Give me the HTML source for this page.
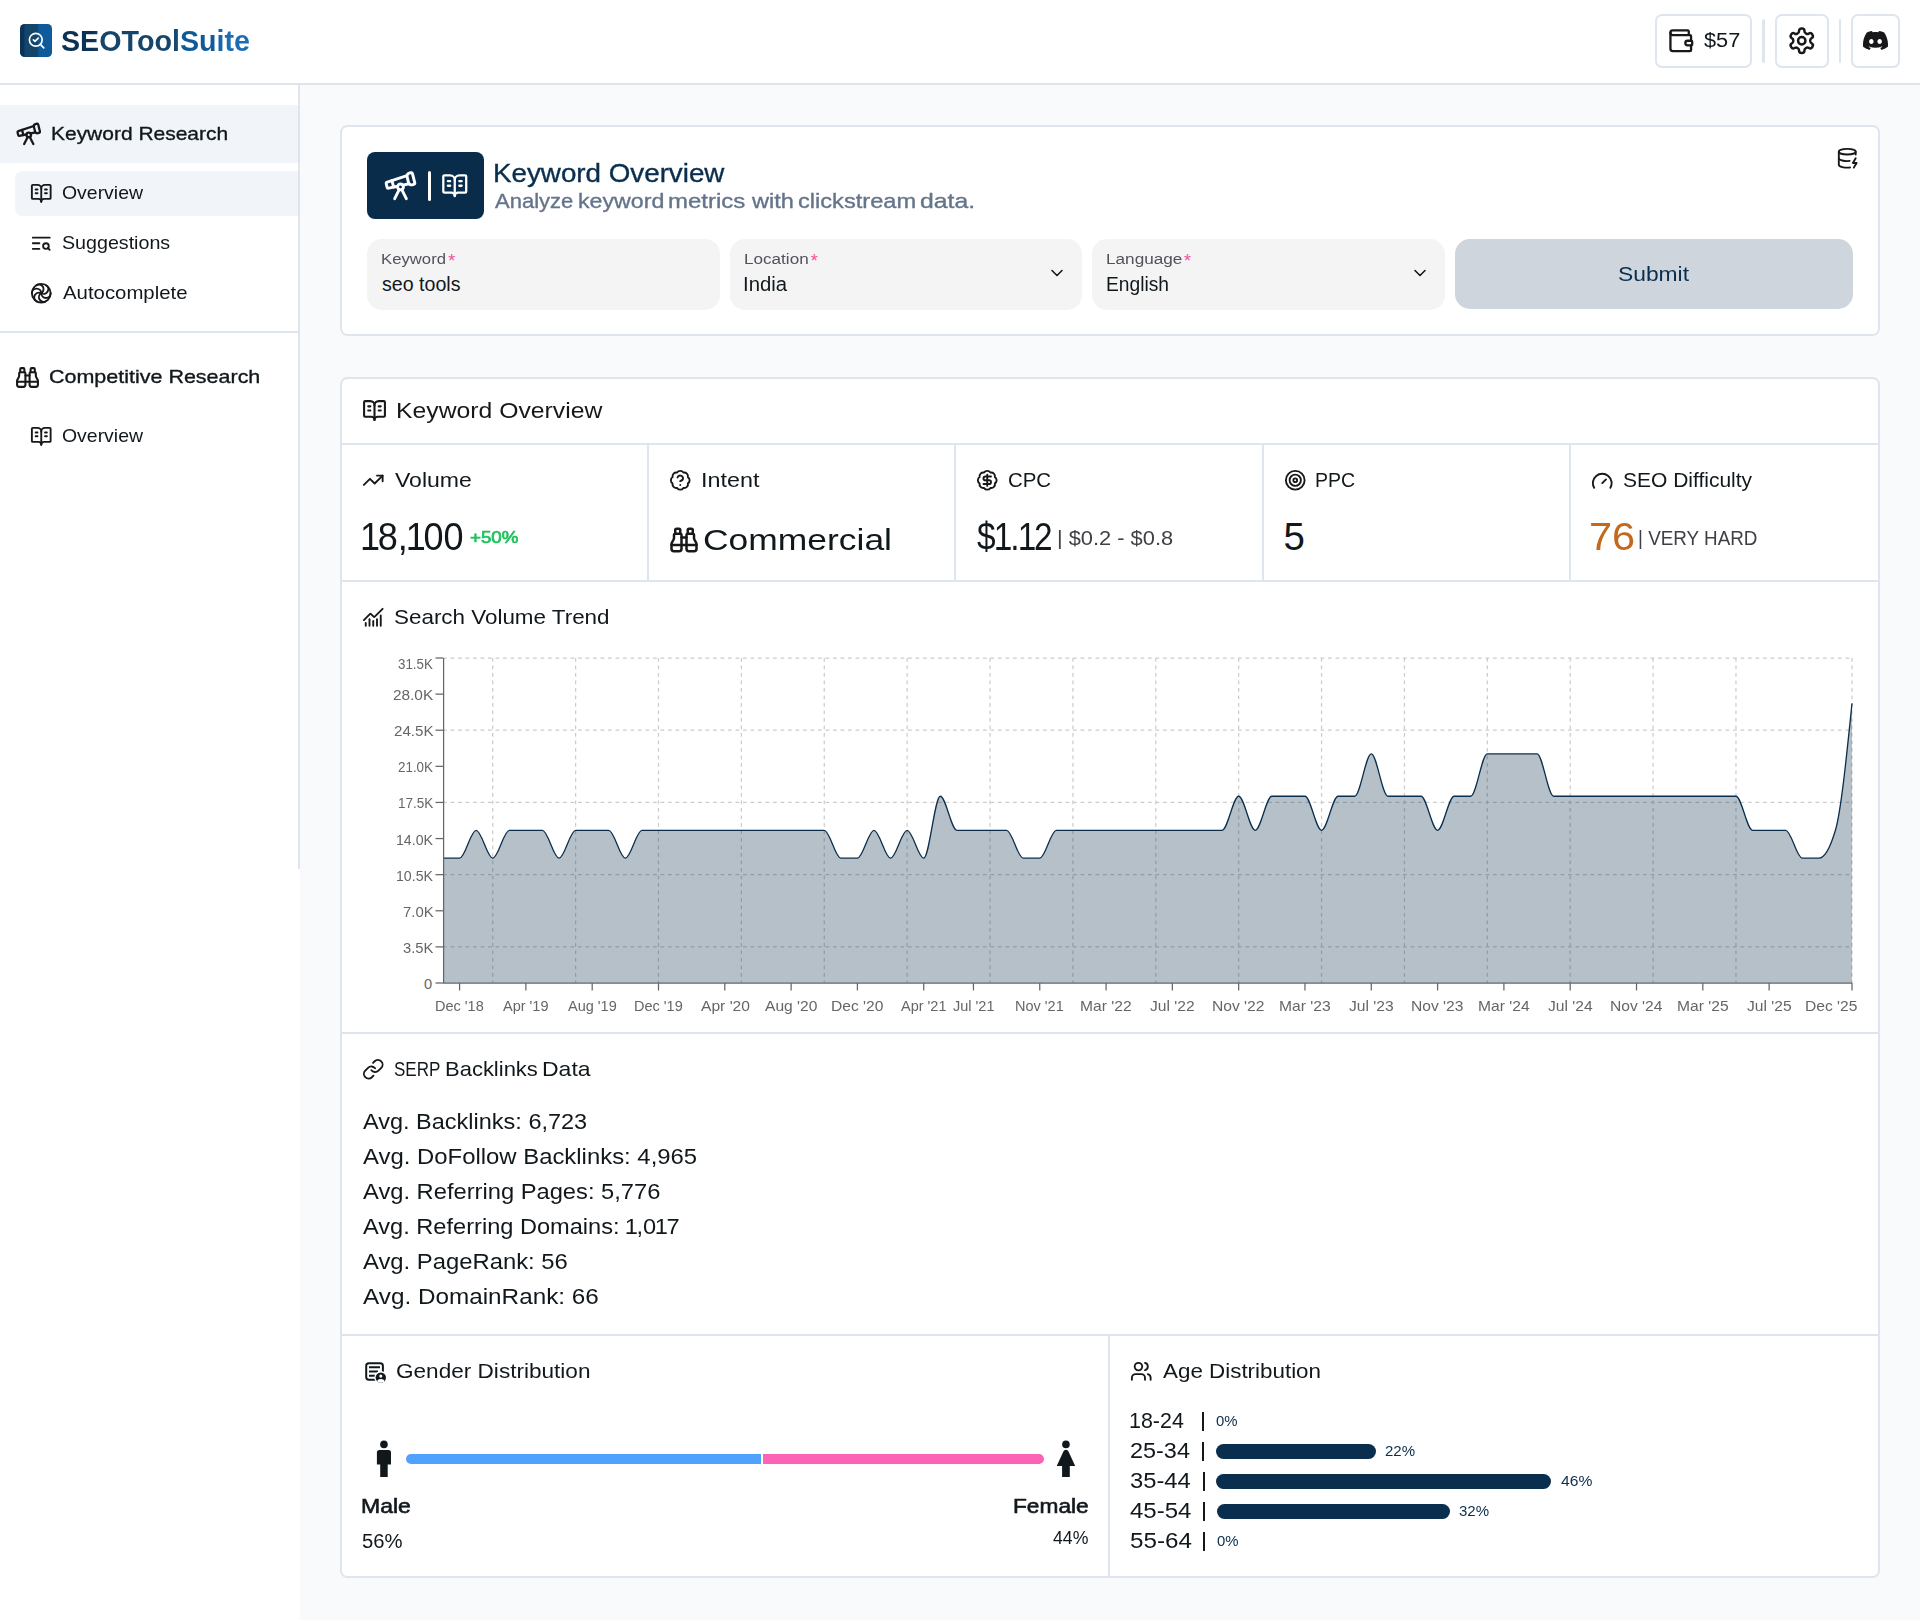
<!DOCTYPE html>
<html lang="en">
<head>
<meta charset="utf-8">
<title>SEOToolSuite - Keyword Overview</title>
<style>
*{box-sizing:border-box;margin:0;padding:0}
html,body{width:1920px;height:1620px;overflow:hidden;background:#fff}
body{position:relative;font-family:"Liberation Sans",sans-serif;color:#11181c;-webkit-font-smoothing:antialiased}
.abs{position:absolute}
.t{position:absolute;white-space:nowrap;line-height:1;transform-origin:0 0}
svg{display:block}
.ic{position:absolute;fill:none;stroke:#18181b;stroke-width:2;stroke-linecap:round;stroke-linejoin:round}
.m{-webkit-text-stroke:0.35px currentColor}
/* header */
#hdr{left:0;top:0;width:1920px;height:85px;background:#fff;border-bottom:2px solid #dfe5ef}
#logo{left:20px;top:24px;width:32px;height:32.75px;border-radius:4.5px;background:linear-gradient(90deg,#0b3358 0%,#0b3358 11%,#14456b 17%,#14456b 54%,#0f5a9a 59%,#0f5a9a 100%)}
.brand{background:linear-gradient(90deg,#0b3154 0%,#0b3154 16.5%,#16456b 19.5%,#16456b 59.5%,#115a98 62.5%,#115a98 80%,#1b6db3 86%,#1b6db3 100%);-webkit-background-clip:text;background-clip:text;color:transparent}
.hbtn{border:2px solid #dfe5ef;border-radius:7px;background:#fff;height:54px;top:14px}
.hsep{width:3px;height:44px;top:19px;background:#dfe5ef;border-radius:2px}
/* main */
#main{left:300px;top:85px;width:1620px;height:1535px;background:#f8fafc}
.card{background:#fff;border:2px solid #dfe5ef;border-radius:7.5px}
.hl{position:absolute;height:2px;background:#dfe5ef}
.vl{position:absolute;width:2px;background:#dfe5ef}
</style>
</head>
<body>
<div class="abs" id="main"></div>
<div class="abs" id="hdr"></div>
<div class="abs" id="logo"><svg class="ic" style="left:6.5px;top:6.9px;stroke:#fff;stroke-width:2.1" width="19.2" height="19.2" viewBox="0 0 24 24"><path d="m8 11 2 2 4-4"/><circle cx="11" cy="11" r="8"/><path d="m21 21-4.3-4.3"/></svg></div>
<div class="t brand" style="left:60.58px;top:22px;font-size:30.40px;line-height:36px;transform:scaleX(0.9433);font-weight:700;padding-right:2px;">SEOToolSuite</div>

<!-- header buttons -->
<div class="abs hbtn" style="left:1655px;width:97px"></div>
<svg class="ic" style="left:1666.9px;top:26.55px" width="27.5" height="27.5" viewBox="0 0 24 24"><path d="M19 7V4a1 1 0 0 0-1-1H5a2 2 0 0 0 0 4h15a1 1 0 0 1 1 1v4h-3a2 2 0 0 0 0 4h3a1 1 0 0 0 1-1v-2a1 1 0 0 0-1-1"/><path d="M3 5v14a2 2 0 0 0 2 2h15a1 1 0 0 0 1-1v-4"/></svg>
<div class="t" style="left:1704.48px;top:28px;font-size:20.30px;line-height:24px;transform:scaleX(1.0740);">$57</div>

<div class="abs hsep" style="left:1762px"></div>
<div class="abs hbtn" style="left:1775px;width:54px"></div>
<svg class="ic" style="left:1787.35px;top:25.95px" width="29.5" height="29.5" viewBox="0 0 24 24"><path d="M12.22 2h-.44a2 2 0 0 0-2 2v.18a2 2 0 0 1-1 1.73l-.43.25a2 2 0 0 1-2 0l-.15-.08a2 2 0 0 0-2.73.73l-.22.38a2 2 0 0 0 .73 2.73l.15.1a2 2 0 0 1 1 1.72v.51a2 2 0 0 1-1 1.74l-.15.09a2 2 0 0 0-.73 2.73l.22.38a2 2 0 0 0 2.73.73l.15-.08a2 2 0 0 1 2 0l.43.25a2 2 0 0 1 1 1.73V20a2 2 0 0 0 2 2h.44a2 2 0 0 0 2-2v-.18a2 2 0 0 1 1-1.73l.43-.25a2 2 0 0 1 2 0l.15.08a2 2 0 0 0 2.73-.73l.22-.39a2 2 0 0 0-.73-2.73l-.15-.08a2 2 0 0 1-1-1.74v-.5a2 2 0 0 1 1-1.74l.15-.09a2 2 0 0 0 .73-2.73l-.22-.38a2 2 0 0 0-2.73-.73l-.15.08a2 2 0 0 1-2 0l-.43-.25a2 2 0 0 1-1-1.73V4a2 2 0 0 0-2-2z"/><circle cx="12" cy="12" r="3"/></svg>
<div class="abs hsep" style="left:1839px;width:2px"></div>
<div class="abs hbtn" style="left:1851px;width:49px"></div>
<svg class="abs" style="left:1863.1px;top:28px" width="25" height="25" viewBox="0 0 24 24"><path fill="#18181b" d="M20.317 4.3698a19.7913 19.7913 0 00-4.8851-1.5152.0741.0741 0 00-.0785.0371c-.211.3753-.4447.8648-.6083 1.2495-1.8447-.2762-3.68-.2762-5.4868 0-.1636-.3933-.4058-.8742-.6177-1.2495a.077.077 0 00-.0785-.037 19.7363 19.7363 0 00-4.8852 1.515.0699.0699 0 00-.0321.0277C.5334 9.0458-.319 13.5799.0992 18.0578a.0824.0824 0 00.0312.0561c2.0528 1.5076 4.0413 2.4228 5.9929 3.0294a.0777.0777 0 00.0842-.0276c.4616-.6304.8731-1.2952 1.226-1.9942a.076.076 0 00-.0416-.1057c-.6528-.2476-1.2743-.5495-1.8722-.8923a.077.077 0 01-.0076-.1277c.1258-.0943.2517-.1923.3718-.2914a.0743.0743 0 01.0776-.0105c3.9278 1.7933 8.18 1.7933 12.0614 0a.0739.0739 0 01.0785.0095c.1202.099.246.1981.3728.2924a.077.077 0 01-.0066.1276 12.2986 12.2986 0 01-1.873.8914.0766.0766 0 00-.0407.1067c.3604.698.7719 1.3628 1.225 1.9932a.076.076 0 00.0842.0286c1.961-.6067 3.9495-1.5219 6.0023-3.0294a.077.077 0 00.0313-.0552c.5004-5.177-.8382-9.6739-3.5485-13.6604a.061.061 0 00-.0312-.0286zM8.02 15.3312c-1.1825 0-2.1569-1.0857-2.1569-2.419 0-1.3332.9555-2.4189 2.157-2.4189 1.2108 0 2.1757 1.0952 2.1568 2.419 0 1.3332-.9555 2.4189-2.1569 2.4189zm7.9748 0c-1.1825 0-2.1569-1.0857-2.1569-2.419 0-1.3332.9554-2.4189 2.1569-2.4189 1.2108 0 2.1757 1.0952 2.1568 2.419 0 1.3332-.946 2.4189-2.1568 2.4189Z"/></svg>
<!-- sidebar -->
<div class="abs" style="left:0;top:85px;width:300px;height:784px;background:#fff;border-right:2px solid #dfe5ef"></div>
<div class="abs" style="left:0;top:105px;width:298px;height:58px;background:#f1f5f9"></div>
<svg class="ic" style="left:15px;top:119.8px" width="27.5" height="27.5" viewBox="0 0 24 24"><path d="m10.065 12.493-6.18 1.318a.934.934 0 0 1-1.108-.702l-.537-2.15a1.07 1.07 0 0 1 .691-1.265l13.504-4.44"/><path d="m13.56 11.747 4.332-.924"/><path d="m16 21-3.105-6.21"/><path d="M16.485 5.94a2 2 0 0 1 1.455-2.425l1.09-.272a1 1 0 0 1 1.212.727l1.515 6.06a1 1 0 0 1-.727 1.213l-1.09.272a2 2 0 0 1-2.425-1.455z"/><path d="m6.158 8.633 1.114 4.456"/><path d="m8 21 3.105-6.21"/><circle cx="12" cy="13" r="2"/></svg>
<div class="t m" style="left:51.02px;top:122px;font-size:19.00px;line-height:23px;transform:scaleX(1.1033);color:#11181c;">Keyword Research</div>

<div class="abs" style="left:15px;top:171px;width:283px;height:45px;background:#f1f5f9;border-radius:8px 0 0 8px"></div>
<svg class="ic" style="left:29.9px;top:181.9px" width="22.5" height="22.5" viewBox="0 0 24 24"><path d="M12 7v14"/><path d="M16 12h2"/><path d="M16 8h2"/><path d="M3 18a1 1 0 0 1-1-1V4a1 1 0 0 1 1-1h5a4 4 0 0 1 4 4 4 4 0 0 1 4-4h5a1 1 0 0 1 1 1v13a1 1 0 0 1-1 1h-6a3 3 0 0 0-3 3 3 3 0 0 0-3-3z"/><path d="M6 12h2"/><path d="M6 8h2"/></svg>
<div class="t" style="left:61.53px;top:182px;font-size:17.70px;line-height:22px;transform:scaleX(1.0984);color:#11181c;">Overview</div>

<svg class="ic" style="left:29.9px;top:232px" width="22.5" height="22.5" viewBox="0 0 24 24"><path d="M21 6H3"/><path d="M10 12H3"/><path d="M10 18H3"/><circle cx="17" cy="15" r="3"/><path d="m21 19-1.9-1.9"/></svg>
<div class="t" style="left:61.71px;top:232px;font-size:17.70px;line-height:22px;transform:scaleX(1.1112);color:#11181c;">Suggestions</div>

<svg class="ic" style="left:29.9px;top:282px" width="22.5" height="22.5" viewBox="0 0 24 24"><path d="M22 12a1 1 0 0 1-10 0 1 1 0 0 0-10 0"/><path d="M7 20.7a1 1 0 1 1 5-8.7 1 1 0 1 0 5-8.6"/><path d="M7 3.3a1 1 0 1 1 5 8.6 1 1 0 1 0 5 8.6"/><circle cx="12" cy="12" r="10"/></svg>
<div class="t" style="left:63.00px;top:282px;font-size:17.70px;line-height:22px;transform:scaleX(1.1513);color:#11181c;">Autocomplete</div>

<div class="hl" style="left:0;top:331px;width:298px"></div>
<svg class="ic" style="left:15px;top:365.1px" width="25" height="25" viewBox="0 0 24 24"><path d="M10 10h4"/><path d="M19 7V4a1 1 0 0 0-1-1h-2a1 1 0 0 0-1 1v3"/><path d="M20 21a2 2 0 0 0 2-2v-3.851c0-1.39-2-2.962-2-4.829V8a1 1 0 0 0-1-1h-4a1 1 0 0 0-1 1v11a2 2 0 0 0 2 2z"/><path d="M 22 16 L 2 16"/><path d="M4 21a2 2 0 0 1-2-2v-3.851c0-1.39 2-2.962 2-4.829V8a1 1 0 0 1 1-1h4a1 1 0 0 1 1 1v11a2 2 0 0 1-2 2z"/><path d="M9 7V4a1 1 0 0 0-1-1H6a1 1 0 0 0-1 1v3"/></svg>
<div class="t m" style="left:49.13px;top:365px;font-size:19.00px;line-height:23px;transform:scaleX(1.1306);color:#11181c;">Competitive Research</div>

<svg class="ic" style="left:29.9px;top:425.3px" width="22.5" height="22.5" viewBox="0 0 24 24"><path d="M12 7v14"/><path d="M16 12h2"/><path d="M16 8h2"/><path d="M3 18a1 1 0 0 1-1-1V4a1 1 0 0 1 1-1h5a4 4 0 0 1 4 4 4 4 0 0 1 4-4h5a1 1 0 0 1 1 1v13a1 1 0 0 1-1 1h-6a3 3 0 0 0-3 3 3 3 0 0 0-3-3z"/><path d="M6 12h2"/><path d="M6 8h2"/></svg>
<div class="t" style="left:61.53px;top:425px;font-size:17.70px;line-height:22px;transform:scaleX(1.0984);color:#11181c;">Overview</div>

<!-- card 1 -->
<div class="abs card" style="left:340px;top:125px;width:1540px;height:211px"></div>
<div class="abs" style="left:367px;top:152px;width:117px;height:67px;background:#082c4a;border-radius:8px"></div>
<svg class="ic" style="left:382.85px;top:168px;stroke:#fff" width="35" height="35" viewBox="0 0 24 24"><path d="m10.065 12.493-6.18 1.318a.934.934 0 0 1-1.108-.702l-.537-2.15a1.07 1.07 0 0 1 .691-1.265l13.504-4.44"/><path d="m13.56 11.747 4.332-.924"/><path d="m16 21-3.105-6.21"/><path d="M16.485 5.94a2 2 0 0 1 1.455-2.425l1.09-.272a1 1 0 0 1 1.212.727l1.515 6.06a1 1 0 0 1-.727 1.213l-1.09.272a2 2 0 0 1-2.425-1.455z"/><path d="m6.158 8.633 1.114 4.456"/><path d="m8 21 3.105-6.21"/><circle cx="12" cy="13" r="2"/></svg>
<div class="abs" style="left:428px;top:171px;width:3px;height:29.5px;background:#fff;border-radius:1.5px"></div>
<svg class="ic" style="left:441px;top:172.1px;stroke:#fff" width="27.5" height="27.5" viewBox="0 0 24 24"><path d="M12 7v14"/><path d="M16 12h2"/><path d="M16 8h2"/><path d="M3 18a1 1 0 0 1-1-1V4a1 1 0 0 1 1-1h5a4 4 0 0 1 4 4 4 4 0 0 1 4-4h5a1 1 0 0 1 1 1v13a1 1 0 0 1-1 1h-6a3 3 0 0 0-3 3 3 3 0 0 0-3-3z"/><path d="M6 12h2"/><path d="M6 8h2"/></svg>
<div class="t m" style="left:493.28px;top:158px;font-size:25.00px;line-height:30px;transform:scaleX(1.1104);color:#0a2e4d;">Keyword Overview</div>

<div class="t m" style="left:494.60px;top:189px;font-size:19.80px;line-height:24px;transform:scaleX(1.1121);color:#64748b;">Analyze</div>

<div class="t m" style="left:577.99px;top:189px;font-size:19.80px;line-height:24px;transform:scaleX(1.1714);color:#64748b;">keyword</div>

<div class="t m" style="left:668.34px;top:189px;font-size:19.80px;line-height:24px;transform:scaleX(1.2124);color:#64748b;">metrics</div>

<div class="t m" style="left:751.70px;top:189px;font-size:19.80px;line-height:24px;transform:scaleX(1.1892);color:#64748b;">with</div>

<div class="t m" style="left:797.85px;top:189px;font-size:19.80px;line-height:24px;transform:scaleX(1.1936);color:#64748b;">clickstream</div>

<div class="t m" style="left:920.41px;top:189px;font-size:19.80px;line-height:24px;transform:scaleX(1.2512);color:#64748b;">data.</div>

<svg class="ic" style="left:1835.9px;top:147.1px" width="22.5" height="22.5" viewBox="0 0 24 24"><ellipse cx="12" cy="5" rx="9" ry="3"/><path d="M3 5V19A9 3 0 0 0 15 21.84"/><path d="M21 5V8"/><path d="M21 12L18 17H22L19 22"/><path d="M3 12A9 3 0 0 0 14.59 14.87"/></svg>
<!-- inputs -->
<div class="abs" style="left:367px;top:239px;width:353px;height:71px;background:#f4f4f5;border-radius:15px"></div>
<div class="t" style="left:381.16px;top:249px;font-size:15.20px;line-height:19px;transform:scaleX(1.1000);color:#52525b;">Keyword</div>

<div class="t" style="left:448.33px;top:250px;font-size:18.00px;line-height:22px;color:#f4529f;">*</div>

<div class="t" style="left:382.01px;top:272px;font-size:19.60px;line-height:24px;color:#11181c;">seo tools</div>

<div class="abs" style="left:730px;top:239px;width:352.3px;height:71px;background:#f4f4f5;border-radius:15px"></div>
<div class="t" style="left:743.83px;top:249px;font-size:15.20px;line-height:19px;transform:scaleX(1.1260);color:#52525b;">Location</div>

<div class="t" style="left:810.63px;top:250px;font-size:18.00px;line-height:22px;color:#f4529f;">*</div>

<div class="t" style="left:743.37px;top:272px;font-size:19.60px;line-height:24px;transform:scaleX(1.0376);color:#11181c;">India</div>

<svg class="ic" style="left:1047px;top:263px;stroke-width:1.9" width="20" height="20" viewBox="0 0 24 24"><path d="m6 9 6 6 6-6"/></svg>
<div class="abs" style="left:1092px;top:239px;width:353px;height:71px;background:#f4f4f5;border-radius:15px"></div>
<div class="t" style="left:1105.93px;top:249px;font-size:15.20px;line-height:19px;transform:scaleX(1.1304);color:#52525b;">Language</div>

<div class="t" style="left:1183.93px;top:250px;font-size:18.00px;line-height:22px;color:#f4529f;">*</div>

<div class="t" style="left:1105.76px;top:272px;font-size:19.60px;line-height:24px;transform:scaleX(0.9814);color:#11181c;">English</div>

<svg class="ic" style="left:1409.5px;top:263px;stroke-width:1.9" width="20" height="20" viewBox="0 0 24 24"><path d="m6 9 6 6 6-6"/></svg>
<div class="abs" style="left:1455px;top:239px;width:398px;height:70px;background:#ced5dd;border-radius:15px"></div>
<div class="t" style="left:1617.97px;top:262px;font-size:20.30px;line-height:24px;transform:scaleX(1.1250);color:#0a2e4d;">Submit</div>

<!-- card 2 -->
<div class="abs card" style="left:340px;top:377px;width:1540px;height:1201px"></div>
<svg class="ic" style="left:362.3px;top:397.9px" width="25" height="25" viewBox="0 0 24 24"><path d="M12 7v14"/><path d="M16 12h2"/><path d="M16 8h2"/><path d="M3 18a1 1 0 0 1-1-1V4a1 1 0 0 1 1-1h5a4 4 0 0 1 4 4 4 4 0 0 1 4-4h5a1 1 0 0 1 1 1v13a1 1 0 0 1-1 1h-6a3 3 0 0 0-3 3 3 3 0 0 0-3-3z"/><path d="M6 12h2"/><path d="M6 8h2"/></svg>
<div class="t" style="left:395.72px;top:396px;font-size:22.70px;line-height:28px;transform:scaleX(1.0912);color:#18181b;">Keyword Overview</div>

<div class="hl" style="left:342px;top:443px;width:1536px"></div>
<div class="vl" style="left:647px;top:445px;height:135px"></div>
<div class="vl" style="left:954px;top:445px;height:135px"></div>
<div class="vl" style="left:1261.5px;top:445px;height:135px"></div>
<div class="vl" style="left:1569px;top:445px;height:135px"></div>
<div class="hl" style="left:342px;top:580px;width:1536px"></div>
<!-- volume -->
<svg class="ic" style="left:361.8px;top:468.7px" width="22.5" height="22.5" viewBox="0 0 24 24"><polyline points="22 7 13.5 15.5 8.5 10.5 2 17"/><polyline points="16 7 22 7 22 13"/></svg>
<div class="t" style="left:395.00px;top:468px;font-size:20.20px;line-height:24px;transform:scaleX(1.1418);">Volume</div>

<div class="t" style="left:362.24px;top:514px;font-size:38.40px;line-height:45px;transform:scaleX(0.9384);"><span style="margin:0 -0.066em 0 -0.054em">1</span>8,<span style="margin:0 -0.066em 0 -0.054em">1</span>00</div>

<div class="t" style="left:470.06px;top:526px;font-size:17.30px;line-height:22px;transform:scaleX(1.0845);color:#1fc25c;-webkit-text-stroke:.7px currentColor;">+50%</div>

<!-- intent -->
<svg class="ic" style="left:669.3px;top:469.3px" width="22.5" height="22.5" viewBox="0 0 24 24"><path d="M3.85 8.62a4 4 0 0 1 4.78-4.77 4 4 0 0 1 6.74 0 4 4 0 0 1 4.78 4.78 4 4 0 0 1 0 6.74 4 4 0 0 1-4.77 4.78 4 4 0 0 1-6.75 0 4 4 0 0 1-4.78-4.77 4 4 0 0 1 0-6.76Z"/><path d="M9.09 9a3 3 0 0 1 5.83 1c0 2-3 3-3 3"/><line x1="12" x2="12.01" y1="17" y2="17"/></svg>
<div class="t" style="left:700.70px;top:468px;font-size:20.20px;line-height:24px;transform:scaleX(1.1565);">Intent</div>

<svg class="ic" style="left:668.75px;top:525.2px" width="30" height="30" viewBox="0 0 24 24"><path d="M10 10h4"/><path d="M19 7V4a1 1 0 0 0-1-1h-2a1 1 0 0 0-1 1v3"/><path d="M20 21a2 2 0 0 0 2-2v-3.851c0-1.39-2-2.962-2-4.829V8a1 1 0 0 0-1-1h-4a1 1 0 0 0-1 1v11a2 2 0 0 0 2 2z"/><path d="M 22 16 L 2 16"/><path d="M4 21a2 2 0 0 1-2-2v-3.851c0-1.39 2-2.962 2-4.829V8a1 1 0 0 1 1-1h4a1 1 0 0 1 1 1v11a2 2 0 0 1-2 2z"/><path d="M9 7V4a1 1 0 0 0-1-1H6a1 1 0 0 0-1 1v3"/></svg>
<div class="t" style="left:703.23px;top:521px;font-size:30.40px;line-height:36px;transform:scaleX(1.1658);">Commercial</div>

<!-- cpc -->
<svg class="ic" style="left:975.8px;top:469px" width="22.5" height="22.5" viewBox="0 0 24 24"><path d="M3.85 8.62a4 4 0 0 1 4.78-4.77 4 4 0 0 1 6.74 0 4 4 0 0 1 4.78 4.78 4 4 0 0 1 0 6.74 4 4 0 0 1-4.77 4.78 4 4 0 0 1-6.75 0 4 4 0 0 1-4.78-4.77 4 4 0 0 1 0-6.76Z"/><path d="M16 8h-6a2 2 0 1 0 0 4h4a2 2 0 1 1 0 4H8"/><path d="M12 18V6"/></svg>
<div class="t" style="left:1008.28px;top:468px;font-size:19.80px;line-height:24px;transform:scaleX(1.0325);">CPC</div>

<div class="t" style="left:977.47px;top:514px;font-size:38.40px;line-height:45px;transform:scaleX(0.8704);">$<span style="margin:0 -0.066em 0 -0.054em">1</span>.<span style="margin:0 -0.066em 0 -0.054em">1</span>2</div>

<div class="t" style="left:1057.44px;top:526px;font-size:20.00px;line-height:24px;transform:scaleX(1.0914);color:#3f3f46;">| $0.2 - $0.8</div>

<!-- ppc -->
<svg class="ic" style="left:1283.8px;top:469px" width="22.5" height="22.5" viewBox="0 0 24 24"><circle cx="12" cy="12" r="10"/><circle cx="12" cy="12" r="6"/><circle cx="12" cy="12" r="2"/></svg>
<div class="t" style="left:1314.54px;top:468px;font-size:19.80px;line-height:24px;transform:scaleX(0.9867);">PPC</div>

<div class="t" style="left:1283.46px;top:514px;font-size:38.40px;line-height:45px;">5</div>

<!-- seo difficulty -->
<svg class="ic" style="left:1590.7px;top:469.7px" width="22.5" height="22.5" viewBox="0 0 24 24"><path d="m12 14 4-4"/><path d="M3.34 19a10 10 0 1 1 17.32 0"/></svg>
<div class="t" style="left:1622.56px;top:468px;font-size:20.20px;line-height:24px;transform:scaleX(1.0396);">SEO Difficulty</div>

<div class="t" style="left:1588.52px;top:514px;font-size:38.40px;line-height:45px;transform:scaleX(1.0825);color:#c2691c;">76</div>

<div class="t" style="left:1638.40px;top:526px;font-size:20.00px;line-height:24px;transform:scaleX(0.9428);color:#3f3f46;">| VERY HARD</div>

<!-- chart -->
<svg class="ic" style="left:361.8px;top:606.4px" width="22.5" height="22.5" viewBox="0 0 24 24"><path d="M12 16v5"/><path d="M16 14v7"/><path d="M20 10v11"/><path d="m22 3-8.646 8.646a.5.5 0 0 1-.708 0L9.354 8.354a.5.5 0 0 0-.707 0L2 15"/><path d="M4 18v3"/><path d="M8 14v7"/></svg>
<div class="t" style="left:393.99px;top:605px;font-size:20.20px;line-height:24px;transform:scaleX(1.1103);">Search Volume Trend</div>

<svg class="abs" style="left:0;top:0" width="1920" height="1620" viewBox="0 0 1920 1620">
<g stroke="#ccc" stroke-width="1.25" stroke-dasharray="3.75 3.75" fill="none"><line x1="443" x2="1852" y1="946.89" y2="946.89"/><line x1="443" x2="1852" y1="874.67" y2="874.67"/><line x1="443" x2="1852" y1="802.44" y2="802.44"/><line x1="443" x2="1852" y1="730.22" y2="730.22"/><line x1="443" x2="1852" y1="658.00" y2="658.00"/><line y1="658" y2="983" x1="492.73" x2="492.73"/><line y1="658" y2="983" x1="575.61" x2="575.61"/><line y1="658" y2="983" x1="658.49" x2="658.49"/><line y1="658" y2="983" x1="741.38" x2="741.38"/><line y1="658" y2="983" x1="824.26" x2="824.26"/><line y1="658" y2="983" x1="907.14" x2="907.14"/><line y1="658" y2="983" x1="990.02" x2="990.02"/><line y1="658" y2="983" x1="1072.91" x2="1072.91"/><line y1="658" y2="983" x1="1155.79" x2="1155.79"/><line y1="658" y2="983" x1="1238.67" x2="1238.67"/><line y1="658" y2="983" x1="1321.55" x2="1321.55"/><line y1="658" y2="983" x1="1404.44" x2="1404.44"/><line y1="658" y2="983" x1="1487.32" x2="1487.32"/><line y1="658" y2="983" x1="1570.20" x2="1570.20"/><line y1="658" y2="983" x1="1653.08" x2="1653.08"/><line y1="658" y2="983" x1="1735.96" x2="1735.96"/><line y1="658" y2="983" x1="1852.00" x2="1852.00"/></g>
<path d="M443.00,858.16L459.58,858.16C465.10,858.16,470.63,830.30,476.15,830.30C481.68,830.30,487.20,858.16,492.73,858.16C498.25,858.16,503.78,830.30,509.31,830.30L525.88,830.30L542.46,830.30C547.98,830.30,553.51,858.16,559.04,858.16C564.56,858.16,570.09,830.30,575.61,830.30L592.19,830.30L608.76,830.30C614.29,830.30,619.82,858.16,625.34,858.16C630.87,858.16,636.39,830.30,641.92,830.30L658.49,830.30L675.07,830.30L691.65,830.30L708.22,830.30L724.80,830.30L741.38,830.30L757.95,830.30L774.53,830.30L791.11,830.30L807.68,830.30L824.26,830.30C829.78,830.30,835.31,858.16,840.84,858.16L857.41,858.16C862.94,858.16,868.46,830.30,873.99,830.30C879.51,830.30,885.04,858.16,890.56,858.16C896.09,858.16,901.62,830.30,907.14,830.30C912.67,830.30,918.19,858.16,923.72,858.16C929.24,858.16,934.77,796.25,940.29,796.25C945.82,796.25,951.35,830.30,956.87,830.30L973.45,830.30L990.02,830.30L1006.60,830.30C1012.13,830.30,1017.65,858.16,1023.18,858.16L1039.75,858.16C1045.28,858.16,1050.80,830.30,1056.33,830.30L1072.91,830.30L1089.48,830.30L1106.06,830.30L1122.64,830.30L1139.21,830.30L1155.79,830.30L1172.36,830.30L1188.94,830.30L1205.52,830.30L1222.09,830.30C1227.62,830.30,1233.15,796.25,1238.67,796.25C1244.20,796.25,1249.72,830.30,1255.25,830.30C1260.77,830.30,1266.30,796.25,1271.82,796.25L1288.40,796.25L1304.98,796.25C1310.50,796.25,1316.03,830.30,1321.55,830.30C1327.08,830.30,1332.60,796.25,1338.13,796.25L1354.71,796.25C1360.23,796.25,1365.76,753.95,1371.28,753.95C1376.81,753.95,1382.33,796.25,1387.86,796.25L1404.44,796.25L1421.01,796.25C1426.54,796.25,1432.06,830.30,1437.59,830.30C1443.11,830.30,1448.64,796.25,1454.16,796.25L1470.74,796.25C1476.27,796.25,1481.79,753.95,1487.32,753.95L1503.89,753.95L1520.47,753.95L1537.05,753.95C1542.57,753.95,1548.10,796.25,1553.62,796.25L1570.20,796.25L1586.78,796.25L1603.35,796.25L1619.93,796.25L1636.51,796.25L1653.08,796.25L1669.66,796.25L1686.24,796.25L1702.81,796.25L1719.39,796.25L1735.96,796.25C1741.49,796.25,1747.02,830.30,1752.54,830.30L1769.12,830.30L1785.69,830.30C1791.22,830.30,1796.75,858.16,1802.27,858.16L1818.85,858.16C1824.37,858.16,1829.90,848.87,1835.42,830.30C1840.95,811.73,1846.47,757.56,1852.00,703.40L1852,983L443,983Z" fill="#0a2e4d" fill-opacity="0.3" stroke="none"/>
<path d="M443.00,858.16L459.58,858.16C465.10,858.16,470.63,830.30,476.15,830.30C481.68,830.30,487.20,858.16,492.73,858.16C498.25,858.16,503.78,830.30,509.31,830.30L525.88,830.30L542.46,830.30C547.98,830.30,553.51,858.16,559.04,858.16C564.56,858.16,570.09,830.30,575.61,830.30L592.19,830.30L608.76,830.30C614.29,830.30,619.82,858.16,625.34,858.16C630.87,858.16,636.39,830.30,641.92,830.30L658.49,830.30L675.07,830.30L691.65,830.30L708.22,830.30L724.80,830.30L741.38,830.30L757.95,830.30L774.53,830.30L791.11,830.30L807.68,830.30L824.26,830.30C829.78,830.30,835.31,858.16,840.84,858.16L857.41,858.16C862.94,858.16,868.46,830.30,873.99,830.30C879.51,830.30,885.04,858.16,890.56,858.16C896.09,858.16,901.62,830.30,907.14,830.30C912.67,830.30,918.19,858.16,923.72,858.16C929.24,858.16,934.77,796.25,940.29,796.25C945.82,796.25,951.35,830.30,956.87,830.30L973.45,830.30L990.02,830.30L1006.60,830.30C1012.13,830.30,1017.65,858.16,1023.18,858.16L1039.75,858.16C1045.28,858.16,1050.80,830.30,1056.33,830.30L1072.91,830.30L1089.48,830.30L1106.06,830.30L1122.64,830.30L1139.21,830.30L1155.79,830.30L1172.36,830.30L1188.94,830.30L1205.52,830.30L1222.09,830.30C1227.62,830.30,1233.15,796.25,1238.67,796.25C1244.20,796.25,1249.72,830.30,1255.25,830.30C1260.77,830.30,1266.30,796.25,1271.82,796.25L1288.40,796.25L1304.98,796.25C1310.50,796.25,1316.03,830.30,1321.55,830.30C1327.08,830.30,1332.60,796.25,1338.13,796.25L1354.71,796.25C1360.23,796.25,1365.76,753.95,1371.28,753.95C1376.81,753.95,1382.33,796.25,1387.86,796.25L1404.44,796.25L1421.01,796.25C1426.54,796.25,1432.06,830.30,1437.59,830.30C1443.11,830.30,1448.64,796.25,1454.16,796.25L1470.74,796.25C1476.27,796.25,1481.79,753.95,1487.32,753.95L1503.89,753.95L1520.47,753.95L1537.05,753.95C1542.57,753.95,1548.10,796.25,1553.62,796.25L1570.20,796.25L1586.78,796.25L1603.35,796.25L1619.93,796.25L1636.51,796.25L1653.08,796.25L1669.66,796.25L1686.24,796.25L1702.81,796.25L1719.39,796.25L1735.96,796.25C1741.49,796.25,1747.02,830.30,1752.54,830.30L1769.12,830.30L1785.69,830.30C1791.22,830.30,1796.75,858.16,1802.27,858.16L1818.85,858.16C1824.37,858.16,1829.90,848.87,1835.42,830.30C1840.95,811.73,1846.47,757.56,1852.00,703.40" fill="none" stroke="#0a2e4d" stroke-width="1.3"/>
<g stroke="#666" stroke-width="1.25" fill="none"><line x1="443.6" x2="443.6" y1="658" y2="983"/><line x1="443" x2="1852" y1="983" y2="983"/><line x1="435.5" x2="443" y1="983.00" y2="983.00"/><line x1="435.5" x2="443" y1="946.89" y2="946.89"/><line x1="435.5" x2="443" y1="910.78" y2="910.78"/><line x1="435.5" x2="443" y1="874.67" y2="874.67"/><line x1="435.5" x2="443" y1="838.56" y2="838.56"/><line x1="435.5" x2="443" y1="802.44" y2="802.44"/><line x1="435.5" x2="443" y1="766.33" y2="766.33"/><line x1="435.5" x2="443" y1="730.22" y2="730.22"/><line x1="435.5" x2="443" y1="694.11" y2="694.11"/><line x1="435.5" x2="443" y1="658.00" y2="658.00"/><line y1="983" y2="990.5" x1="459.58" x2="459.58"/><line y1="983" y2="990.5" x1="525.88" x2="525.88"/><line y1="983" y2="990.5" x1="592.19" x2="592.19"/><line y1="983" y2="990.5" x1="658.49" x2="658.49"/><line y1="983" y2="990.5" x1="724.80" x2="724.80"/><line y1="983" y2="990.5" x1="791.11" x2="791.11"/><line y1="983" y2="990.5" x1="857.41" x2="857.41"/><line y1="983" y2="990.5" x1="923.72" x2="923.72"/><line y1="983" y2="990.5" x1="973.45" x2="973.45"/><line y1="983" y2="990.5" x1="1039.75" x2="1039.75"/><line y1="983" y2="990.5" x1="1106.06" x2="1106.06"/><line y1="983" y2="990.5" x1="1172.36" x2="1172.36"/><line y1="983" y2="990.5" x1="1238.67" x2="1238.67"/><line y1="983" y2="990.5" x1="1304.98" x2="1304.98"/><line y1="983" y2="990.5" x1="1371.28" x2="1371.28"/><line y1="983" y2="990.5" x1="1437.59" x2="1437.59"/><line y1="983" y2="990.5" x1="1503.89" x2="1503.89"/><line y1="983" y2="990.5" x1="1570.20" x2="1570.20"/><line y1="983" y2="990.5" x1="1636.51" x2="1636.51"/><line y1="983" y2="990.5" x1="1702.81" x2="1702.81"/><line y1="983" y2="990.5" x1="1769.12" x2="1769.12"/><line y1="983" y2="990.5" x1="1852.00" x2="1852.00"/></g>
</svg>
<div class="t" style="left:423.89px;top:975px;font-size:14.60px;line-height:18px;color:#666;">0</div>

<div class="t" style="left:402.78px;top:939px;font-size:14.60px;line-height:18px;transform:scaleX(1.0130);color:#666;">3.5K</div>

<div class="t" style="left:402.56px;top:903px;font-size:14.60px;line-height:18px;transform:scaleX(1.0205);color:#666;">7.0K</div>

<div class="t" style="left:396.24px;top:867px;font-size:14.60px;line-height:18px;transform:scaleX(0.9692);color:#666;">10.5K</div>

<div class="t" style="left:396.24px;top:831px;font-size:14.60px;line-height:18px;transform:scaleX(0.9692);color:#666;">14.0K</div>

<div class="t" style="left:397.89px;top:794px;font-size:14.60px;line-height:18px;transform:scaleX(0.9259);color:#666;">17.5K</div>

<div class="t" style="left:398.23px;top:758px;font-size:14.60px;line-height:18px;transform:scaleX(0.9168);color:#666;">21.0K</div>

<div class="t" style="left:393.64px;top:722px;font-size:14.60px;line-height:18px;transform:scaleX(1.0375);color:#666;">24.5K</div>

<div class="t" style="left:393.03px;top:686px;font-size:14.60px;line-height:18px;transform:scaleX(1.0535);color:#666;">28.0K</div>

<div class="t" style="left:398.43px;top:655px;font-size:14.60px;line-height:18px;transform:scaleX(0.9115);color:#666;">31.5K</div>

<div class="t" style="left:434.92px;top:997px;font-size:14.80px;line-height:18px;transform:scaleX(0.9799);color:#666;">Dec '18</div>

<div class="t" style="left:503.47px;top:997px;font-size:14.80px;line-height:18px;transform:scaleX(0.9801);color:#666;">Apr '19</div>

<div class="t" style="left:568.15px;top:997px;font-size:14.80px;line-height:18px;transform:scaleX(0.9800);color:#666;">Aug '19</div>

<div class="t" style="left:633.87px;top:997px;font-size:14.80px;line-height:18px;transform:scaleX(0.9800);color:#666;">Dec '19</div>

<div class="t" style="left:700.60px;top:997px;font-size:14.80px;line-height:18px;transform:scaleX(1.0549);color:#666;">Apr '20</div>

<div class="t" style="left:765.15px;top:997px;font-size:14.80px;line-height:18px;transform:scaleX(1.0549);color:#666;">Aug '20</div>

<div class="t" style="left:830.83px;top:997px;font-size:14.80px;line-height:18px;transform:scaleX(1.0551);color:#666;">Dec '20</div>

<div class="t" style="left:901.31px;top:997px;font-size:14.80px;line-height:18px;transform:scaleX(0.9801);color:#666;">Apr '21</div>

<div class="t" style="left:952.92px;top:997px;font-size:14.80px;line-height:18px;transform:scaleX(0.9800);color:#666;">Jul '21</div>

<div class="t" style="left:1015.13px;top:997px;font-size:14.80px;line-height:18px;transform:scaleX(0.9800);color:#666;">Nov '21</div>

<div class="t" style="left:1080.02px;top:997px;font-size:14.80px;line-height:18px;transform:scaleX(1.0551);color:#666;">Mar '22</div>

<div class="t" style="left:1150.28px;top:997px;font-size:14.80px;line-height:18px;transform:scaleX(1.0548);color:#666;">Jul '22</div>

<div class="t" style="left:1212.16px;top:997px;font-size:14.80px;line-height:18px;transform:scaleX(1.0552);color:#666;">Nov '22</div>

<div class="t" style="left:1278.90px;top:997px;font-size:14.80px;line-height:18px;transform:scaleX(1.0549);color:#666;">Mar '23</div>

<div class="t" style="left:1349.15px;top:997px;font-size:14.80px;line-height:18px;transform:scaleX(1.0551);color:#666;">Jul '23</div>

<div class="t" style="left:1411.04px;top:997px;font-size:14.80px;line-height:18px;transform:scaleX(1.0550);color:#666;">Nov '23</div>

<div class="t" style="left:1477.70px;top:997px;font-size:14.80px;line-height:18px;transform:scaleX(1.0551);color:#666;">Mar '24</div>

<div class="t" style="left:1547.95px;top:997px;font-size:14.80px;line-height:18px;transform:scaleX(1.0552);color:#666;">Jul '24</div>

<div class="t" style="left:1609.84px;top:997px;font-size:14.80px;line-height:18px;transform:scaleX(1.0551);color:#666;">Nov '24</div>

<div class="t" style="left:1676.74px;top:997px;font-size:14.80px;line-height:18px;transform:scaleX(1.0549);color:#666;">Mar '25</div>

<div class="t" style="left:1746.99px;top:997px;font-size:14.80px;line-height:18px;transform:scaleX(1.0551);color:#666;">Jul '25</div>

<div class="t" style="left:1804.76px;top:997px;font-size:14.80px;line-height:18px;transform:scaleX(1.0548);color:#666;">Dec '25</div>

<!-- serp -->
<div class="hl" style="left:342px;top:1032px;width:1536px"></div>
<svg class="ic" style="left:361.8px;top:1058px" width="22.5" height="22.5" viewBox="0 0 24 24"><path d="M10 13a5 5 0 0 0 7.54.54l3-3a5 5 0 0 0-7.07-7.07l-1.72 1.71"/><path d="M14 11a5 5 0 0 0-7.54-.54l-3 3a5 5 0 0 0 7.07 7.07l1.71-1.71"/></svg>
<div class="t" style="left:394.23px;top:1057px;font-size:20.20px;line-height:24px;transform:scaleX(0.8430);">SERP</div>

<div class="t" style="left:444.74px;top:1057px;font-size:20.20px;line-height:24px;transform:scaleX(1.0889);">Backlinks</div>

<div class="t" style="left:541.56px;top:1057px;font-size:20.20px;line-height:24px;transform:scaleX(1.1385);">Data</div>

<div class="t" style="left:362.70px;top:1107px;font-size:22.70px;line-height:28px;transform:scaleX(1.0355);">Avg. Backlinks: 6,723</div>

<div class="t" style="left:362.70px;top:1142px;font-size:22.70px;line-height:28px;transform:scaleX(1.0529);">Avg. DoFollow Backlinks: 4,965</div>

<div class="t" style="left:362.70px;top:1177px;font-size:22.70px;line-height:28px;transform:scaleX(1.0449);">Avg. Referring Pages: 5,776</div>

<div class="t" style="left:362.70px;top:1212px;font-size:22.70px;line-height:28px;transform:scaleX(1.0399);">Avg. Referring Domains: <span style="margin:0 -0.066em 0 -0.054em">1</span>,0<span style="margin:0 -0.066em 0 -0.054em">1</span>7</div>

<div class="t" style="left:362.70px;top:1247px;font-size:22.70px;line-height:28px;transform:scaleX(1.0499);">Avg. PageRank: 56</div>

<div class="t" style="left:362.70px;top:1282px;font-size:22.70px;line-height:28px;transform:scaleX(1.0706);">Avg. DomainRank: 66</div>

<div class="hl" style="left:342px;top:1334px;width:1536px"></div>
<div class="vl" style="left:1108px;top:1336px;height:240px"></div>
<!-- gender -->
<svg class="abs" style="left:363px;top:1360px" width="24" height="24" viewBox="0 0 24 24"><defs><clipPath id="gc"><circle cx="17.8" cy="17.6" r="5.2"/></clipPath></defs><rect x="3.2" y="3.2" width="16.7" height="16.5" rx="2.6" fill="none" stroke="#11181c" stroke-width="2"/><path d="M6 7.2h11M6 11.4h9M6 15.8h6" stroke="#11181c" stroke-width="2" fill="none"/><circle cx="17.8" cy="17.6" r="6.5" fill="#fff"/><circle cx="17.8" cy="17.6" r="5.2" fill="#11181c"/><g clip-path="url(#gc)" fill="#fff"><circle cx="17.8" cy="16.1" r="1.55"/><ellipse cx="17.8" cy="21.6" rx="3.6" ry="2.5"/></g></svg>
<div class="t" style="left:395.77px;top:1359px;font-size:20.20px;line-height:24px;transform:scaleX(1.1182);">Gender Distribution</div>

<svg class="abs" style="left:370px;top:1436px" width="30" height="46" viewBox="370 1436 30 46"><circle cx="383.95" cy="1444.4" r="3.8" fill="#11181c"/><path fill="#11181c" d="M379.4 1450h9.1a2.5 2.5 0 0 1 2.5 2.5v11.9h-3.3v12.7h-7.5v-12.7h-3.3v-11.9a2.500 2.500 0 0 1 2.500-2.500z"/></svg>
<div class="abs" style="left:405.8px;top:1454px;width:355.7px;height:10px;background:#51a2ff;border-radius:5px 0 0 5px"></div>
<div class="abs" style="left:762.6px;top:1454px;width:281.4px;height:10px;background:#fb64b6;border-radius:0 5px 5px 0"></div>
<svg class="abs" style="left:1050px;top:1436px" width="32" height="46" viewBox="1050 1436 32 46"><circle cx="1065.95" cy="1444.4" r="3.8" fill="#11181c"/><path fill="#11181c" d="M1063.4 1451.6a2.700 2.700 0 0 1 5.100 0l6.700 14.400h-5.400v11.100h-7.700v-11.100h-5.400z"/></svg>
<div class="t" style="left:361.36px;top:1494px;font-size:20.40px;line-height:24px;transform:scaleX(1.1266);-webkit-text-stroke:.6px currentColor;">Male</div>

<div class="t" style="left:1012.78px;top:1494px;font-size:20.40px;line-height:24px;transform:scaleX(1.1130);-webkit-text-stroke:.6px currentColor;">Female</div>

<div class="t" style="left:362.19px;top:1529px;font-size:20.00px;line-height:24px;transform:scaleX(1.0130);">56%</div>

<div class="t" style="left:1053.05px;top:1527px;font-size:17.60px;line-height:22px;transform:scaleX(1.0049);">44%</div>

<!-- age -->
<svg class="ic" style="left:1129.8px;top:1360px" width="22.5" height="22.5" viewBox="0 0 24 24"><path d="M16 21v-2a4 4 0 0 0-4-4H6a4 4 0 0 0-4 4v2"/><circle cx="9" cy="7" r="4"/><path d="M22 21v-2a4 4 0 0 0-3-3.870"/><path d="M16 3.130a4 4 0 0 1 0 7.750"/></svg>
<div class="t" style="left:1163.20px;top:1359px;font-size:20.20px;line-height:24px;transform:scaleX(1.1089);">Age Distribution</div>

<div class="t" style="left:1129.09px;top:1407px;font-size:22.00px;line-height:27px;transform:scaleX(0.9739);">18-24</div>

<div class="t" style="left:1129.53px;top:1437px;font-size:22.00px;line-height:27px;transform:scaleX(1.0649);">25-34</div>

<div class="t" style="left:1129.87px;top:1467px;font-size:22.00px;line-height:27px;transform:scaleX(1.0803);">35-44</div>

<div class="t" style="left:1130.22px;top:1497px;font-size:22.00px;line-height:27px;transform:scaleX(1.0920);">45-54</div>

<div class="t" style="left:1129.73px;top:1527px;font-size:22.00px;line-height:27px;transform:scaleX(1.1008);">55-64</div>

<div class="abs" style="left:1201.6px;top:1411.5px;width:2px;height:19px;background:#18181b"></div>
<div class="abs" style="left:1202.2px;top:1441.5px;width:2px;height:19px;background:#18181b"></div>
<div class="abs" style="left:1202.6px;top:1471.5px;width:2px;height:19px;background:#18181b"></div>
<div class="abs" style="left:1203px;top:1501.5px;width:2px;height:19px;background:#18181b"></div>
<div class="abs" style="left:1203px;top:1531.5px;width:2px;height:19px;background:#18181b"></div>
<div class="t" style="left:1215.68px;top:1411px;font-size:15.50px;line-height:19px;transform:scaleX(0.9619);color:#0a2e4d;">0%</div>

<div class="abs" style="left:1216.2px;top:1444px;width:160px;height:15px;border-radius:7.5px;background:#0a2e4d"></div>
<div class="t" style="left:1385.25px;top:1441px;font-size:15.50px;line-height:19px;transform:scaleX(0.9703);color:#0a2e4d;">22%</div>

<div class="abs" style="left:1216.2px;top:1474px;width:334.6px;height:15px;border-radius:7.5px;background:#0a2e4d"></div>
<div class="t" style="left:1560.89px;top:1471px;font-size:15.50px;line-height:19px;transform:scaleX(1.0084);color:#0a2e4d;">46%</div>

<div class="abs" style="left:1217px;top:1504px;width:232.8px;height:15px;border-radius:7.5px;background:#0a2e4d"></div>
<div class="t" style="left:1459.47px;top:1501px;font-size:15.50px;line-height:19px;transform:scaleX(0.9694);color:#0a2e4d;">32%</div>

<div class="t" style="left:1216.98px;top:1531px;font-size:15.50px;line-height:19px;transform:scaleX(0.9619);color:#0a2e4d;">0%</div>

</body>
</html>
